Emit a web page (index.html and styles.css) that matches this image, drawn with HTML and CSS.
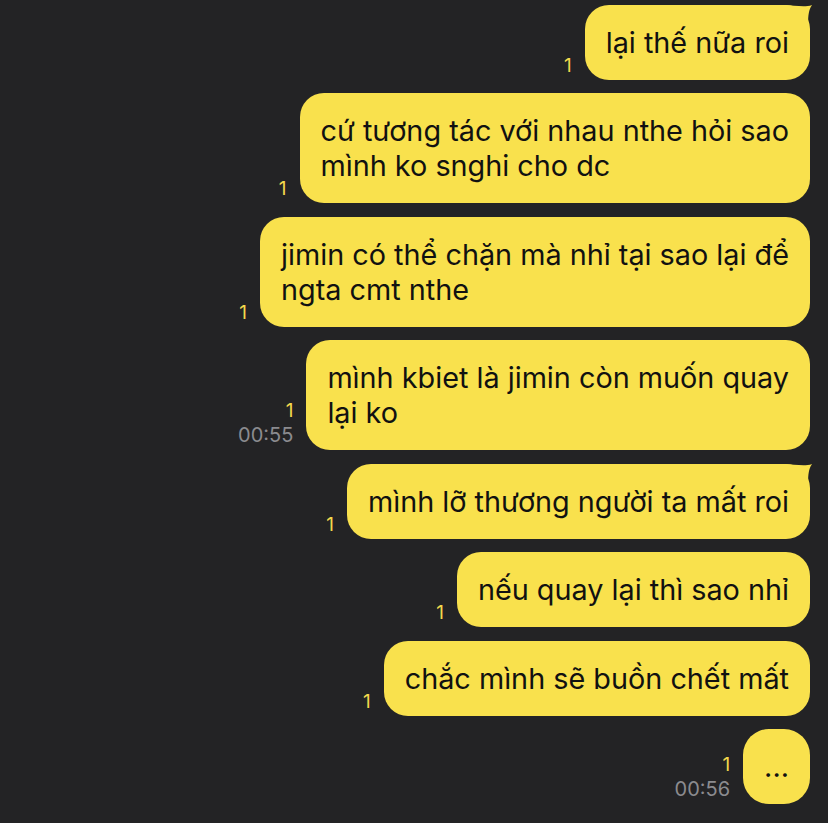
FILE: index.html
```html
<!DOCTYPE html>
<html lang="vi">
<head>
<meta charset="utf-8">
<link rel="stylesheet" href="styles.css">
</head>
<body>
<div class="chat">
  <div class="row">
    <div class="meta"><span class="unread">1</span></div>
    <div class="bubble tail"><svg class="tail-svg" width="30" height="30" viewBox="0 0 30 30"><path d="M0,0 C10,0 20,3 28,0 C24,6 24,12 24,30 L0,30 Z"/></svg><span class="text">lại thế nữa roi</span></div>
  </div>
  <div class="row">
    <div class="meta"><span class="unread">1</span></div>
    <div class="bubble">cứ tương tác với nhau nthe hỏi sao<br>mình ko snghi cho dc</div>
  </div>
  <div class="row">
    <div class="meta"><span class="unread">1</span></div>
    <div class="bubble">jimin có thể chặn mà nhỉ tại sao lại để<br>ngta cmt nthe</div>
  </div>
  <div class="row">
    <div class="meta"><span class="unread">1</span><span class="time">00:55</span></div>
    <div class="bubble">mình kbiet là jimin còn muốn quay<br>lại ko</div>
  </div>
  <div class="row">
    <div class="meta"><span class="unread">1</span></div>
    <div class="bubble tail"><svg class="tail-svg" width="30" height="30" viewBox="0 0 30 30"><path d="M0,0 C10,0 20,3 28,0 C24,6 24,12 24,30 L0,30 Z"/></svg><span class="text">mình lỡ thương người ta mất roi</span></div>
  </div>
  <div class="row">
    <div class="meta"><span class="unread">1</span></div>
    <div class="bubble">nếu quay lại thì sao nhỉ</div>
  </div>
  <div class="row">
    <div class="meta"><span class="unread">1</span></div>
    <div class="bubble">chắc mình sẽ buồn chết mất</div>
  </div>
  <div class="row">
    <div class="meta"><span class="unread">1</span><span class="time">00:56</span></div>
    <div class="bubble dots">...</div>
  </div>
</div>
</body>
</html>
```

FILE: styles.css
```css
html, body {
  margin: 0;
  padding: 0;
  background: #232325;
}
body {
  width: 828px;
  height: 823px;
  overflow: hidden;
  font-family: Inter, "Noto Sans", sans-serif;
}
.chat {
  display: flex;
  flex-direction: column;
  gap: 13.5px;
  padding: 4.5px 18px 0 0;
}
.row {
  display: flex;
  justify-content: flex-end;
  align-items: flex-end;
  gap: 13px;
}
.meta {
  display: flex;
  flex-direction: column;
  align-items: flex-end;
  padding-bottom: 2px;
  line-height: 25px;
}
.unread {
  color: #f2d84c;
  font-size: 19px;
}
.time {
  color: #8b8b8f;
  font-size: 20px;
}
.bubble {
  position: relative;
  background: #f9e14d;
  color: #111;
  font-size: 28.8px;
  line-height: 35px;
  padding: 20px 21px;
  border-radius: 24px;
  white-space: nowrap;
}
.text {
  position: relative;
}
.tail-svg {
  position: absolute;
  right: -4px;
  top: 0;
  fill: #f9e14d;
}
.dots {
  border-radius: 26px;
}
```
